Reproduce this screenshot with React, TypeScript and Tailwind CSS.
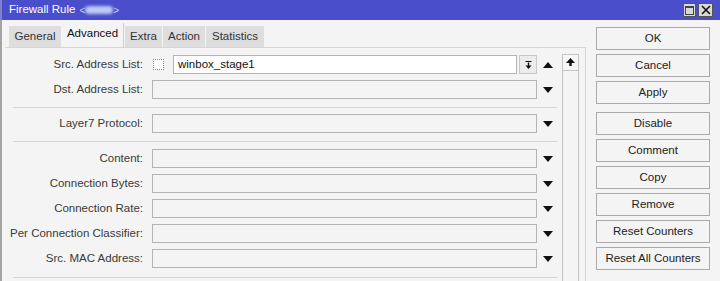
import React from 'react';

const DownArrow = () => (
  <svg width="10" height="6" viewBox="0 0 10 6">
    <polygon points="0,0 10,0 5,6" fill="#111" />
  </svg>
);

const UpArrow = () => (
  <svg width="10" height="6" viewBox="0 0 10 6">
    <polygon points="0,6 5,0 10,6" fill="#111" />
  </svg>
);

const tabs = [
  { name: 'General', w: 'w-[52px]' },
  { name: 'Advanced', w: 'w-[62px]', active: true },
  { name: 'Extra', w: 'w-[37px]' },
  { name: 'Action', w: 'w-[42px]' },
  { name: 'Statistics', w: 'w-[58px]' },
];

const FieldRow = ({ label }: { label: string }) => (
  <div className="flex items-center h-[19px]">
    <div className="w-[138px] text-right whitespace-nowrap">{label}</div>
    <div className="ml-[9px] flex-1 h-[19px] border border-[#b4b4b4] bg-[#f4f4f4]" />
    <div className="w-[22px] flex justify-center">
      <DownArrow />
    </div>
  </div>
);

const Separator = ({ className }: { className: string }) => (
  <div className={`ml-[8px] mr-[2px] h-px bg-[#d4d4d4] ${className}`} />
);

const buttons = [
  ['OK', 'Cancel', 'Apply'],
  ['Disable', 'Comment', 'Copy', 'Remove', 'Reset Counters', 'Reset All Counters'],
];

export default function App() {
  return (
    <div className="w-[720px] h-[281px] overflow-hidden bg-[#f4f4f4] text-[11.5px] text-[#3a3a3a] font-['Liberation_Sans',Arial,sans-serif]">
      {/* title bar */}
      <div className="h-[20px] bg-[#4a4ecb] flex items-center pl-[7px] pr-[7px] text-white border-l-2 border-[#7f82c8]">
        <span className="text-[11.5px]">Firewall Rule</span>
        <span className="ml-[4px] flex items-center">
          <span className="text-[#c8d0f4] text-[10px]">&lt;</span>
          <span className="w-[28px] h-[8px] rounded-full bg-[#bcc8f5] blur-[1.5px]" />
          <span className="text-[#c8d0f4] text-[10px]">&gt;</span>
        </span>
        <div className="ml-auto flex gap-[2px]">
          <div className="w-[13px] h-[14px] bg-[#d8d8d8] border border-[#555] flex items-center justify-center">
            <div className="w-[9px] h-[9px] border border-[#444] border-t-2" />
          </div>
          <div className="w-[15px] h-[14px] bg-[#d8d8d8] border border-[#555] flex items-center justify-center">
            <svg width="10" height="10" viewBox="0 0 10 10">
              <path d="M1 1 L9 9 M9 1 L1 9" stroke="#111" strokeWidth="1.6" />
            </svg>
          </div>
        </div>
      </div>

      <div className="flex h-[261px]">
        {/* left: tabs + panel */}
        <div className="w-[587px] border-l-2 border-[#a4a4a4] flex flex-col">
          <div className="flex items-end h-[27px] pl-[7px] gap-px">
            {tabs.map((t) => (
              <div
                key={t.name}
                className={`${t.w} flex items-center justify-center ${
                  t.active
                    ? 'h-[24px] bg-[#f4f4f4] text-[#111] border-r border-[#cfcfcf] pb-[3px]'
                    : 'h-[21px] bg-[#dedede] text-[#333]'
                }`}
              >
                {t.name}
              </div>
            ))}
          </div>

          <div className="ml-[3px] w-[581px] flex-1 flex border-t border-r border-[#d6d6d6]">
            <div className="w-[554px] pt-[7px] flex flex-col">
              <div className="flex flex-col gap-[6px]">
                <div className="flex items-center h-[19px]">
                  <div className="w-[138px] text-right whitespace-nowrap">Src. Address List:</div>
                  <div className="ml-[10px] w-[11px] h-[11px] border border-dotted border-[#8a8a8a] bg-white" />
                  <div className="ml-[9px] flex-1 h-[19px] border border-[#b4b4b4] bg-white flex items-center px-[4px] text-[#111]">
                    winbox_stage1
                  </div>
                  <div className="ml-[2px] w-[18px] h-[19px] border border-[#c8c8c8] bg-[#ececec] flex items-center justify-center">
                    <svg width="9" height="10" viewBox="0 0 9 10">
                      <path d="M1.5 1.5 H7.5" stroke="#111" strokeWidth="1" />
                      <path d="M4.5 2.5 V6" stroke="#111" strokeWidth="1.4" />
                      <polygon points="1.5,5.5 7.5,5.5 4.5,9" fill="#111" />
                    </svg>
                  </div>
                  <div className="w-[22px] flex justify-center">
                    <UpArrow />
                  </div>
                </div>
                <FieldRow label="Dst. Address List:" />
              </div>

              <Separator className="mt-[8px] mb-[6px]" />
              <FieldRow label="Layer7 Protocol:" />
              <Separator className="mt-[8px] mb-[7px]" />

              <div className="flex flex-col gap-[6px]">
                <FieldRow label="Content:" />
                <FieldRow label="Connection Bytes:" />
                <FieldRow label="Connection Rate:" />
                <FieldRow label="Per Connection Classifier:" />
                <FieldRow label="Src. MAC Address:" />
              </div>
              <Separator className="mt-[9px]" />
            </div>

            {/* scrollbar */}
            <div className="ml-[3px] w-[17px] mt-[6px] flex flex-col">
              <div className="h-[17px] border border-[#c4c4c4] bg-[#f6f6f6] flex items-start justify-center pt-[3px]">
                <svg width="9" height="9" viewBox="0 0 9 9">
                  <polygon points="0,5 4.5,0 9,5" fill="#111" />
                  <rect x="3.3" y="4.5" width="2.4" height="3.5" fill="#111" />
                </svg>
              </div>
              <div className="flex-1 border-x border-[#c4c4c4]" />
            </div>
          </div>
        </div>

        {/* right: buttons */}
        <div className="pl-[9px] pt-[7px] flex flex-col gap-[8px]">
          {buttons.map((group, gi) => (
            <div key={gi} className="flex flex-col gap-[4px]">
              {group.map((b) => (
                <div
                  key={b}
                  className="w-[114px] h-[23px] border border-[#aaaaaa] bg-[#f4f4f4] flex items-center justify-center text-[#222]"
                >
                  {b}
                </div>
              ))}
            </div>
          ))}
        </div>
      </div>
    </div>
  );
}
